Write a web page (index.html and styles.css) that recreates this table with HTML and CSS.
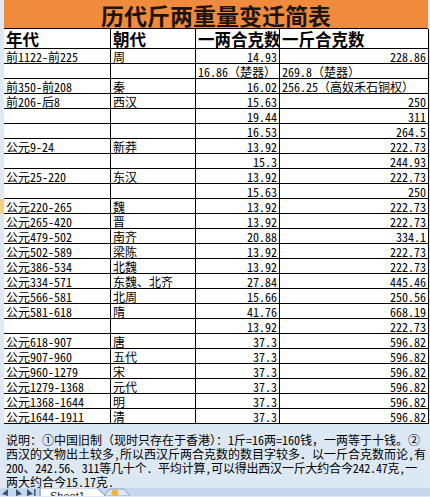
FILE: index.html
```
<!DOCTYPE html>
<html lang="zh-CN">
<head>
<meta charset="utf-8">
<title>历代斤两重量变迁简表</title>
<link rel="stylesheet" href="styles.css">
</head>
<body>
<div class="sheet">
  <div class="title">历代斤两重量变迁简表</div>
  <div class="grid">
    <div class="h">年代</div><div class="h">朝代</div><div class="h">一两合克数</div><div class="h">一斤合克数</div>

    <div class="c">前1122-前225</div><div class="c">周</div><div class="c n">14.93</div><div class="c n">228.86</div>
    <div class="c"></div><div class="c"></div><div class="c">16.86<span class="fw">（楚器）</span></div><div class="c">269.8<span class="fw">（楚器）</span></div>
    <div class="c">前350-前208</div><div class="c">秦</div><div class="c n">16.02</div><div class="c">256.25<span class="fw">（高奴禾石铜权）</span></div>
    <div class="c">前206-后8</div><div class="c">西汉</div><div class="c n">15.63</div><div class="c n">250</div>
    <div class="c"></div><div class="c"></div><div class="c n">19.44</div><div class="c n">311</div>
    <div class="c"></div><div class="c"></div><div class="c n">16.53</div><div class="c n">264.5</div>
    <div class="c">公元9-24</div><div class="c">新莽</div><div class="c n">13.92</div><div class="c n">222.73</div>
    <div class="c"></div><div class="c"></div><div class="c n">15.3</div><div class="c n">244.93</div>
    <div class="c">公元25-220</div><div class="c">东汉</div><div class="c n">13.92</div><div class="c n">222.73</div>
    <div class="c"></div><div class="c"></div><div class="c n">15.63</div><div class="c n">250</div>
    <div class="c active">公元220-265</div><div class="c">魏</div><div class="c n">13.92</div><div class="c n">222.73</div>
    <div class="c">公元265-420</div><div class="c">晋</div><div class="c n">13.92</div><div class="c n">222.73</div>
    <div class="c">公元479-502</div><div class="c">南齐</div><div class="c n">20.88</div><div class="c n">334.1</div>
    <div class="c">公元502-589</div><div class="c">梁陈</div><div class="c n">13.92</div><div class="c n">222.73</div>
    <div class="c">公元386-534</div><div class="c">北魏</div><div class="c n">13.92</div><div class="c n">222.73</div>
    <div class="c">公元334-571</div><div class="c"><span class="fw">东魏、北齐</span></div><div class="c n">27.84</div><div class="c n">445.46</div>
    <div class="c">公元566-581</div><div class="c">北周</div><div class="c n">15.66</div><div class="c n">250.56</div>
    <div class="c">公元581-618</div><div class="c">隋</div><div class="c n">41.76</div><div class="c n">668.19</div>
    <div class="c"></div><div class="c"></div><div class="c n">13.92</div><div class="c n">222.73</div>
    <div class="c">公元618-907</div><div class="c">唐</div><div class="c n">37.3</div><div class="c n">596.82</div>
    <div class="c">公元907-960</div><div class="c">五代</div><div class="c n">37.3</div><div class="c n">596.82</div>
    <div class="c">公元960-1279</div><div class="c">宋</div><div class="c n">37.3</div><div class="c n">596.82</div>
    <div class="c">公元1279-1368</div><div class="c">元代</div><div class="c n">37.3</div><div class="c n">596.82</div>
    <div class="c">公元1368-1644</div><div class="c">明</div><div class="c n">37.3</div><div class="c n">596.82</div>
    <div class="c">公元1644-1911</div><div class="c">清</div><div class="c n">37.3</div><div class="c n">596.82</div>
  </div>
  <div class="notes">
    <div class="line">说明：①中国旧制（现时只存在于香港）：<span class="a">1</span>斤<span class="a">=16</span>两<span class="a">=160</span>钱，一两等于十钱。②</div>
    <div class="line">西汉的文物出土较多<span class="a">,</span>所以西汉斤两合克数的数目字较多．以一斤合克数而论<span class="a">,</span>有</div>
    <div class="line tight"><span class="a">200</span>、<span class="a">242.56</span>、<span class="a">311</span>等几十个<span class="a">. </span>平均计算<span class="a">,</span>可以得出西汉一斤大约合今<span class="a">242.47</span>克<span class="a">,</span>一</div>
    <div class="line">两大约合今<span class="a">15.17</span>克<span class="a">.</span></div>
  </div>
</div>
<div class="tabbar">
  <svg class="tabsvg" width="430" height="8" viewBox="0 0 430 8">
    <rect x="0" y="0" width="430" height="8" fill="#c6d6ec"/>
    <path d="M2 6 L8 1 L8 8 Z" fill="#3b5478"/>
    <path d="M16 1 L22 6 L16 8 Z" fill="#3b5478"/>
    <path d="M27 1 L33 6 L27 8 Z M34 1 H35.5 V8 H34 Z" fill="#3b5478"/>
    <path d="M40 0 V8" stroke="#7d93b3" stroke-width="1"/>
    <path d="M41 8 L41 1 L98 1 L106 8 Z" fill="#ffffff"/>
    <path d="M98 1 L106 8" stroke="#7d93b3" stroke-width="1"/>
    <text x="50" y="12" font-family="Liberation Sans, sans-serif" font-size="11" fill="#1b1b1b">Sheet1</text>
    <path d="M104 8 L110 1 L124 1 L130 8 Z" fill="#dfe7f3" stroke="#8ea3c2" stroke-width="1"/>
    <circle cx="115" cy="5" r="3.5" fill="#f2b640"/>
  </svg>
</div>
</body>
</html>
```
FILE: styles.css
```
html, body {
  margin: 0;
  padding: 0;
}
body {
  width: 430px;
  height: 497px;
  overflow: hidden;
  background: #dfe8f5;
  font-family: "Noto Sans CJK SC", sans-serif;
  color: #000;
}
.sheet {
  margin-left: 4px;
  width: 425px;
}
.title {
  width: 424px;
  height: 26px;
  padding-top: 2px;
  border-bottom: 1px solid #000;
  background: #f08a3c;
  text-align: center;
  font-size: 23px;
  font-weight: bold;
  line-height: 26px;
  color: #1c140e;
  white-space: nowrap;
}
.grid {
  display: grid;
  grid-template-columns: 107px 85px 84px 149px;
  grid-template-rows: 20px;
  grid-auto-rows: 15px;
  background: #fff;
}
.h, .c {
  box-sizing: border-box;
  border-right: 1px solid #000;
  border-bottom: 1px solid #000;
  padding: 0 2px;
  white-space: nowrap;
  overflow: hidden;
}
.h {
  font-size: 16.5px;
  font-weight: bold;
  line-height: 18px;
  padding-top: 1px;
}
.c {
  font-size: 12px;
  line-height: 14px;
  padding-top: 1px;
  font-feature-settings: "hwid" 1;
}
.fw {
  font-feature-settings: normal;
}
.n {
  text-align: right;
}
.active {
  box-shadow: -4px 0 0 #f6cf7e;
  overflow: visible;
}
.notes {
  box-sizing: border-box;
  width: 425px;
  height: 64px;
  padding: 9px 0 0 2px;
  background: #dde8f5;
  font-size: 12px;
  line-height: 14px;
  overflow: hidden;
}
.a {
  font-feature-settings: "hwid" 1;
}
.line {
  white-space: nowrap;
}
.tight {
  letter-spacing: -0.2px;
}
.tabbar {
  height: 8px;
  overflow: hidden;
}
.tabsvg {
  display: block;
}
```
